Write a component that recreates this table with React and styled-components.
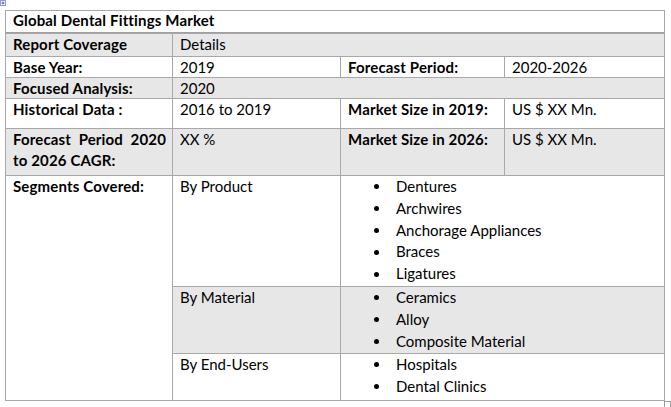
import styled, { createGlobalStyle } from "styled-components";

const Global = createGlobalStyle`
    html, body {
        margin: 0;
        background: #ffffff;
    }
    body {
        font-family: Lato, "Liberation Sans", sans-serif;
        color: #000000;
    }
`

const segments = [
    { label: "By Product", shade: false, items: ["Dentures", "Archwires", "Anchorage Appliances", "Braces", "Ligatures"] },
    { label: "By Material", shade: true, items: ["Ceramics", "Alloy", "Composite Material"] },
    { label: "By End-Users", shade: false, items: ["Hospitals", "Dental Clinics"] },
];

const App = () => {
    return (
    <Page>
        <Global />
        <MoveHandle>
            <svg width="6" height="6" viewBox="0 0 6 6">
                <rect x="0.5" y="0.5" width="5" height="5" fill="#fff" stroke="#8f9fbf" />
                <path d="M3 1.5V4.5M1.5 3H4.5" stroke="#3d5a98" strokeWidth="1" />
            </svg>
        </MoveHandle>
        <Table>
            <Title>Global Dental Fittings Market</Title>

            <Cell $shade $bold>Report Coverage</Cell>
            <Cell $shade $span={3}>Details</Cell>

            <Cell $bold>Base Year:</Cell>
            <Cell>2019</Cell>
            <Cell $bold>Forecast Period:</Cell>
            <Cell>2020-2026</Cell>

            <Cell $shade $bold>Focused Analysis:</Cell>
            <Cell $shade $span={3}>2020</Cell>

            <Cell $bold>Historical Data :</Cell>
            <Cell>2016 to 2019</Cell>
            <Cell $bold>Market Size in 2019:</Cell>
            <Cell>US $ XX Mn.</Cell>

            <Cell $shade $bold $justify>Forecast Period 2020 to 2026 CAGR:</Cell>
            <Cell $shade>XX %</Cell>
            <Cell $shade $bold>Market Size in 2026:</Cell>
            <Cell $shade>US $ XX Mn.</Cell>

            <Cell $bold $rows={3}>Segments Covered:</Cell>
            {segments.map((seg) => (
                <Segment key={seg.label} seg={seg} />
            ))}
        </Table>
        <ResizeHandle />
    </Page>
    )
};

const Segment = ({ seg }) => (
    <>
        <Cell $shade={seg.shade}>{seg.label}</Cell>
        <ListCell $shade={seg.shade}>
            {seg.items.map((item) => (
                <Item key={item}><Dot />{item}</Item>
            ))}
        </ListCell>
    </>
)

const Page = styled.div`
    position: relative;
    width: 671px;
    height: 407px;
    padding: 10px 0 0 5px;
    box-sizing: border-box;
    overflow: hidden;
`
const Table = styled.div`
    display: grid;
    width: max-content;
    grid-template-columns: 166px 167px 163px 159px;
    grid-template-rows: 22px 22px 20px 20px 29px 46px 110px 66px 46px;
    gap: 1px;
    padding: 1px;
    background: #a8a8a8;
    font-size: 15px;
`
const Cell = styled.div`
    grid-column: span ${(p) => p.$span || 1};
    grid-row: span ${(p) => p.$rows || 1};
    background: ${(p) => (p.$shade ? "#e7e7e7" : "#ffffff")};
    font-weight: ${(p) => (p.$bold ? 700 : 400)};
    letter-spacing: ${(p) => (p.$bold ? "0.15px" : "0")};
    text-align: ${(p) => (p.$justify ? "justify" : "left")};
    line-height: 21px;
    padding: 0 6px 0 7px;
`
const Title = styled.div`
    grid-column: 1 / -1;
    background: #ffffff;
    border-bottom: 1px solid #a0a0a0;
    font-weight: 700;
    letter-spacing: 0.15px;
    line-height: 18px;
    padding: 0 7px;
`
const ListCell = styled.ul`
    grid-column: span 2;
    margin: 0;
    padding: 0;
    list-style: none;
    background: ${(p) => (p.$shade ? "#e7e7e7" : "#ffffff")};
`
const Item = styled.li`
    display: flex;
    align-items: center;
    height: 21.8px;
    line-height: 21.8px;
    margin-top: ${(p) => p.$first ? "-1px" : "0"};
`
const Dot = styled.span`
    width: 5px;
    height: 5px;
    border-radius: 50%;
    background: #000000;
    margin: 0 17px 0 33px;
    flex-shrink: 0;
`
const MoveHandle = styled.div`
    position: absolute;
    left: 0;
    top: 0;
    line-height: 0;
`
const ResizeHandle = styled.div`
    position: absolute;
    left: 664px;
    top: 401px;
    width: 5px;
    height: 5px;
    border: 1px solid #9a9a9a;
    background: #ffffff;
`
export default App;
